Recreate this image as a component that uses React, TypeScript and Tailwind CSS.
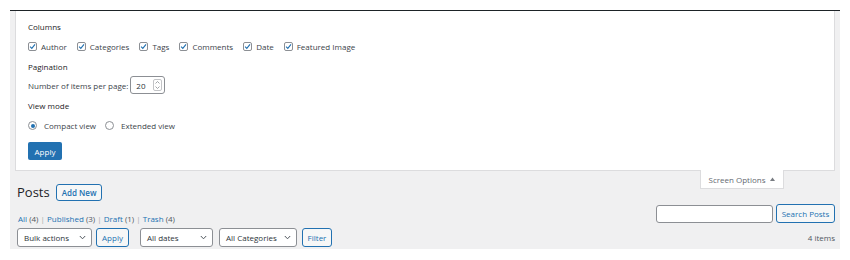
import React from "react";

const font = { fontFamily: '"Open Sans", "Noto Sans", sans-serif' };

function Check({ label }: { label: string }) {
  return (
    <label className="flex items-center gap-[4px]">
      <span className="w-[9px] h-[9px] rounded-[2px] border border-[#8c8f94] bg-white flex items-center justify-center">
        <svg width="7" height="7" viewBox="0 0 10 10">
          <path d="M1.5 5.2 L4 7.6 L8.6 2" fill="none" stroke="#2271b1" strokeWidth="1.6" />
        </svg>
      </span>
      <span>{label}</span>
    </label>
  );
}

function Radio({ label, checked }: { label: string; checked?: boolean }) {
  return (
    <label className="flex items-center gap-[7px]">
      <span className="w-[9px] h-[9px] rounded-full border border-[#8c8f94] bg-white flex items-center justify-center">
        {checked ? <span className="w-[4px] h-[4px] rounded-full bg-[#2271b1]" /> : null}
      </span>
      <span>{label}</span>
    </label>
  );
}

function Select({ label, w }: { label: string; w: string }) {
  return (
    <div className={`${w} h-[19px] bg-white border border-[#8c8f94] rounded-[3px] flex items-center justify-between pl-[6px] pr-[5px] text-[#2c3338]`}>
      <span>{label}</span>
      <svg width="7" height="5" viewBox="0 0 7 5">
        <path d="M0.8 1 L3.5 3.8 L6.2 1" fill="none" stroke="#50575e" strokeWidth="1" />
      </svg>
    </div>
  );
}

function SecBtn({ label, w }: { label: string; w: string }) {
  return (
    <div className={`${w} h-[19px] bg-[#f6f7f7] border border-[#2271b1] rounded-[3px] flex items-center justify-center text-[#2271b1]`}>
      {label}
    </div>
  );
}

export default function App() {
  return (
    <div className="w-[850px] h-[260px] bg-white pt-[10px] text-[8px] leading-[11px] text-[#3c434a]" style={font}>
      <div className="ml-[10px] w-[830px] border-t border-[#1d2327] bg-[#f0f0f1] pb-[2px]">
        <div className="mx-[5px] h-[160px] bg-white border-l border-r border-b border-[#dcdcde] pl-[12px] pt-[10px]">
          <div className="text-[#1d2327] font-medium">Columns</div>
          <div className="flex items-center gap-[10px] mt-[9px]">
            <Check label="Author" />
            <Check label="Categories" />
            <Check label="Tags" />
            <Check label="Comments" />
            <Check label="Date" />
            <Check label="Featured Image" />
          </div>
          <div className="text-[#1d2327] font-medium mt-[9px]">Pagination</div>
          <div className="flex items-center mt-[4px] h-[18px]">
            <span>Number of items per page:</span>
            <div className="ml-[2px] w-[35px] h-[18px] border border-[#8c8f94] rounded-[3px] bg-white flex items-center justify-between pl-[5px] pr-[2px]">
              <span className="text-[#2c3338]">20</span>
              <span className="w-[9px] h-[12px] border border-[#c3c4c7] rounded-[2px] flex flex-col items-center justify-center gap-[2px]">
                <svg width="5" height="3" viewBox="0 0 5 3"><path d="M0.5 2.5 L2.5 0.5 L4.5 2.5" fill="none" stroke="#8c8f94" strokeWidth="0.8" /></svg>
                <svg width="5" height="3" viewBox="0 0 5 3"><path d="M0.5 0.5 L2.5 2.5 L4.5 0.5" fill="none" stroke="#8c8f94" strokeWidth="0.8" /></svg>
              </span>
            </div>
          </div>
          <div className="text-[#1d2327] font-medium mt-[6px]">View mode</div>
          <div className="flex items-center gap-[9px] mt-[9px]">
            <Radio label="Compact view" checked />
            <Radio label="Extended view" />
          </div>
          <div className="mt-[11px] w-[34px] h-[18px] bg-[#2271b1] rounded-[2px] text-white flex items-center justify-center">
            Apply
          </div>
        </div>

        <div className="pl-[7px] pr-[5px]">
          <div className="flex justify-between items-start h-[30px]">
            <div className="flex items-center mt-[13px] h-[17px]">
              <span className="text-[13px] leading-[17px] text-[#1d2327]">Posts</span>
              <span className="ml-[6px] h-[17px] px-[5px] border border-[#2271b1] rounded-[3px] bg-[#f6f7f7] text-[#2271b1] font-semibold flex items-center">
                Add New
              </span>
            </div>
            <div className="mr-[51px] -mt-[1px] w-[84px] h-[19px] bg-white border border-t-0 border-[#dcdcde] flex items-center justify-center gap-[5px] text-[#646970]">
              <span>Screen Options</span>
              <svg width="5" height="4" viewBox="0 0 5 4"><path d="M0 4 L2.5 0.5 L5 4 Z" fill="#787c82" /></svg>
            </div>
          </div>
          <div className="flex justify-between items-end mt-[3px]">
            <div className="mb-[-1px] ml-[1px] text-[#50575e]">
              <span className="text-[#2271b1]">All</span> (4) <span className="text-[#a7aaad]">|</span>{" "}
              <span className="text-[#2271b1]">Published</span> (3) <span className="text-[#a7aaad]">|</span>{" "}
              <span className="text-[#2271b1]">Draft</span> (1) <span className="text-[#a7aaad]">|</span>{" "}
              <span className="text-[#2271b1]">Trash</span> (4)
            </div>
            <div className="flex items-center gap-[3px]">
              <div className="w-[117px] h-[18px] bg-white border border-[#8c8f94] rounded-[3px]" />
              <SecBtn label="Search Posts" w="w-[59px]" />
            </div>
          </div>
          <div className="flex justify-between items-center mt-[5px]">
            <div className="flex items-center">
              <Select label="Bulk actions" w="w-[75px]" />
              <div className="ml-[4px]"><SecBtn label="Apply" w="w-[33px]" /></div>
              <div className="ml-[11px]"><Select label="All dates" w="w-[73px]" /></div>
              <div className="ml-[6px]"><Select label="All Categories" w="w-[78px]" /></div>
              <div className="ml-[5px]"><SecBtn label="Filter" w="w-[30px]" /></div>
            </div>
            <span className="text-[#50575e]">4 items</span>
          </div>
        </div>
      </div>
    </div>
  );
}
